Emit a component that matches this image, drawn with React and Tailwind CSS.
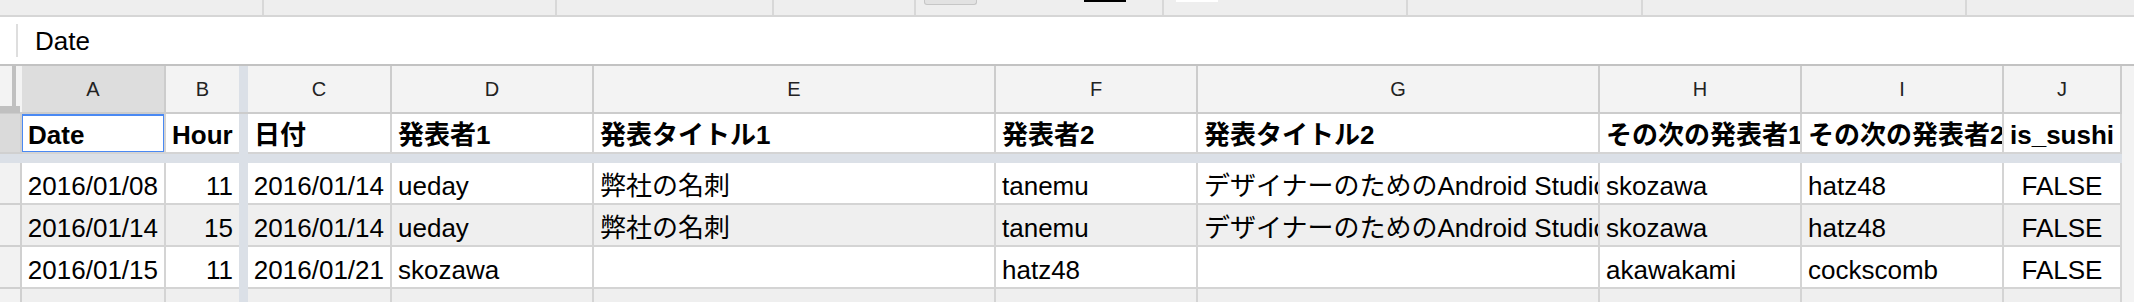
// Spreadsheet view — toolbar strip, formula bar, frozen header row and data rows

const FONT = "font-['Liberation_Sans','Noto_Sans_CJK_JP',sans-serif]";

const columns = [
  { letter: 'A', width: 'w-[144px]', align: 'justify-end', selected: true },
  { letter: 'B', width: 'w-[73px]', align: 'justify-end', freezeAfter: true },
  { letter: 'C', width: 'w-[144px]', align: 'justify-end' },
  { letter: 'D', width: 'w-[202px]', align: 'justify-start' },
  { letter: 'E', width: 'w-[402px]', align: 'justify-start' },
  { letter: 'F', width: 'w-[202px]', align: 'justify-start' },
  { letter: 'G', width: 'w-[402px]', align: 'justify-start' },
  { letter: 'H', width: 'w-[202px]', align: 'justify-start' },
  { letter: 'I', width: 'w-[202px]', align: 'justify-start' },
  { letter: 'J', width: 'w-[118px]', align: 'justify-center' },
];

const headerRow = ['Date', 'Hour', '日付', '発表者1', '発表タイトル1', '発表者2', '発表タイトル2', 'その次の発表者1', 'その次の発表者2', 'is_sushi'];

const rows = [
  ['2016/01/08', '11', '2016/01/14', 'ueday', '弊社の名刺', 'tanemu', 'デザイナーのためのAndroid Studio', 'skozawa', 'hatz48', 'FALSE'],
  ['2016/01/14', '15', '2016/01/14', 'ueday', '弊社の名刺', 'tanemu', 'デザイナーのためのAndroid Studio', 'skozawa', 'hatz48', 'FALSE'],
  ['2016/01/15', '11', '2016/01/21', 'skozawa', '', 'hatz48', '', 'akawakami', 'cockscomb', 'FALSE'],
  ['2016/01/21', '17', '2016/01/21', 'skozawa', '', 'hatz48', '', 'akawakami', 'cockscomb', 'FALSE'],
];

function FreezeCol() {
  return <div className="w-[9px] shrink-0 self-stretch bg-[#dbe0e7]" />;
}

function Toolbar() {
  return (
    <div className="flex h-[17px] shrink-0 border-b-2 border-[#d6d6d6] bg-[#eeeeee]">
      <div className="w-[264px] shrink-0 border-r-2 border-[#d8d8d8]" />
      <div className="w-[293px] shrink-0 border-r-2 border-[#d8d8d8]" />
      <div className="w-[217px] shrink-0 border-r-2 border-[#d8d8d8]" />
      <div className="w-[142px] shrink-0 border-r-2 border-[#d8d8d8]" />
      <div className="flex w-[248px] shrink-0 items-start border-r-2 border-[#d8d8d8]">
        <div className="ml-[8px] h-[5px] w-[53px] rounded-b-[3px] border border-t-0 border-[#c6c6c6] bg-[#e2e2e2]" />
        <div className="ml-[107px] h-[2px] w-[42px] bg-black" />
      </div>
      <div className="flex w-[244px] shrink-0 items-start border-r-2 border-[#d8d8d8]">
        <div className="ml-[12px] h-[2px] w-[42px] bg-white" />
      </div>
      <div className="w-[235px] shrink-0 border-r-2 border-[#d8d8d8]" />
      <div className="w-[324px] shrink-0 border-r-2 border-[#d8d8d8]" />
      <div className="flex-1" />
    </div>
  );
}

function FormulaBar() {
  return (
    <div className="flex h-[47px] shrink-0 items-center bg-white">
      <div className="ml-[16px] h-[33px] w-[2px] bg-[#dedede]" />
      <span className="ml-[17px] text-[26px] leading-[30px] text-black">Date</span>
    </div>
  );
}

function ColumnHeaders() {
  return (
    <div className="flex h-[50px] shrink-0 border-t-2 border-b-2 border-t-[#c2c2c2] border-b-[#cccccc] bg-[#f3f3f3]">
      <div className="relative w-[22px] shrink-0">
        <div className="absolute left-[12px] top-0 bottom-0 w-[4px] bg-[#c0c0c0]" />
        <div className="absolute left-0 right-[2px] bottom-[-1px] h-[7px] bg-[#c0c0c0]" />
      </div>
      {columns.map((c) => (
        <div key={c.letter} className="contents">
          <div
            className={`${c.width} flex shrink-0 items-center justify-center text-[20px] text-[#222222] ${
              c.freezeAfter ? '' : 'border-r-2 border-[#cccccc]'
            } ${c.selected ? 'bg-[#dddddd]' : ''}`}
          >
            {c.letter}
          </div>
          {c.freezeAfter && <FreezeCol />}
        </div>
      ))}
    </div>
  );
}

function Cell({ col, children, bold, bg, selected }) {
  return (
    <div
      className={`${col.width} relative flex shrink-0 items-end overflow-hidden whitespace-nowrap border-b-2 border-[#d4d4d4] px-[6px] pb-[2px] text-[26px] leading-[30px] text-black ${
        col.freezeAfter ? '' : 'border-r-2'
      } ${bold ? 'justify-start font-bold' : col.align} ${bg}`}
    >
      <span>{children}</span>
      {selected && (
        <div className="absolute -left-[2px] -top-[1px] -right-[2px] -bottom-[2px] border-[3px] border-[#4a89f3]" />
      )}
    </div>
  );
}

function Row({ values, bold, bg, height, headerBg }) {
  return (
    <div className={`flex shrink-0 ${height}`}>
      <div className={`w-[22px] shrink-0 border-r-2 border-b-2 border-[#d0d0d0] ${headerBg}`} />
      {columns.map((c, i) => (
        <div key={c.letter} className="contents">
          <Cell col={c} bold={bold} bg={bg} selected={bold && i === 0}>
            {values[i]}
          </Cell>
          {c.freezeAfter && <FreezeCol />}
        </div>
      ))}
    </div>
  );
}

export default function App() {
  return (
    <div className={`flex h-[302px] w-[2134px] flex-col overflow-hidden bg-white ${FONT}`}>
      <Toolbar />
      <FormulaBar />
      <div className="flex min-h-0 flex-1 overflow-hidden">
        <div className="flex w-[2122px] shrink-0 flex-col">
          <ColumnHeaders />
          <Row values={headerRow} bold bg="bg-white" height="h-[40px]" headerBg="bg-[#dadada]" />
          <div className="h-[9px] shrink-0 bg-[#dbe0e7]" />
          {rows.map((r, i) => (
            <Row
              key={i}
              values={r}
              bg={i % 2 === 1 ? 'bg-[#efefef]' : 'bg-white'}
              height="h-[42px]"
              headerBg="bg-[#f2f2f2]"
            />
          ))}
        </div>
        <div className="flex-1 border-t-2 border-[#c2c2c2] bg-[#f3f3f3]" />
      </div>
    </div>
  );
}
